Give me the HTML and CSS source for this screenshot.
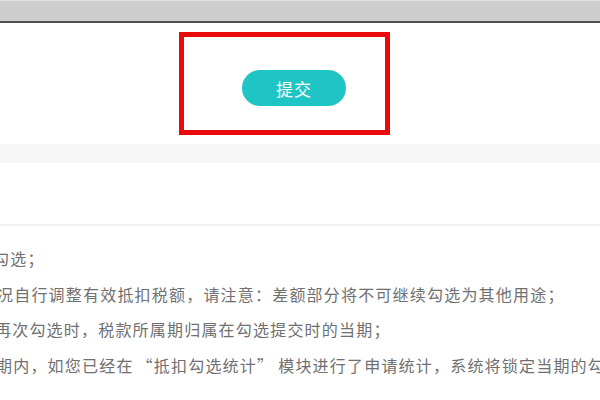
FILE: index.html
```html
<!DOCTYPE html>
<html lang="zh-CN">
<head>
<meta charset="utf-8">
<title>提交</title>
<link rel="stylesheet" href="styles.css">
</head>
<body>
<div class="topbar"></div>
<section class="submit-area">
  <div class="highlight">
    <button class="submit-btn" type="button">提交</button>
  </div>
</section>
<div class="band"></div>
<div class="spacer"></div>
<section class="notes">
  <p class="line l1">勾选；</p>
  <p class="line l2">况自行调整有效抵扣税额，请注意：差额部分将不可继续勾选为其他用途；</p>
  <p class="line l3">再次勾选时，税款所属期归属在勾选提交时的当期；</p>
  <p class="line l4">期内，如您已经在<span class="qo">“</span>抵扣勾选统计<span class="qc">”</span>模块进行了申请统计，系统将锁定当期的勾选</p>
</section>
</body>
</html>
```

FILE: styles.css
```css
html, body {
  margin: 0;
  padding: 0;
  width: 600px;
  height: 400px;
  overflow: hidden;
  background: #ffffff;
  font-family: "Noto Sans CJK SC", "Noto Sans", sans-serif;
}

.topbar {
  height: 20px;
  background: #cdcdcd;
  border-top: 1px solid #e2e2e2;
  border-bottom: 2px solid #505050;
}

.submit-area {
  height: 121px;
  padding-top: 9px;
  box-sizing: border-box;
}

.highlight {
  margin-left: 179px;
  width: 211px;
  height: 103px;
  box-sizing: border-box;
  border: 5px solid #ea0a0a;
  padding-top: 33px;
  padding-left: 58px;
}

.submit-btn {
  display: flex;
  align-items: center;
  justify-content: center;
  width: 104px;
  height: 36px;
  border: none;
  border-radius: 18px;
  background: #1fc5c4;
  color: #ffffff;
  font-family: "Noto Sans CJK SC", "Noto Sans", sans-serif;
  font-size: 17px;
  letter-spacing: 1px;
  padding: 0;
}

.band {
  height: 19px;
  background: #f6f6f6;
}

.spacer {
  height: 61px;
  border-bottom: 2px solid #f0f0f0;
}

.notes {
  padding-top: 15px;
  color: #707070;
  font-size: 16px;
  letter-spacing: 1.2px;
  white-space: nowrap;
}

.line {
  margin: 0;
  line-height: 35.5px;
  height: 35.5px;
}

.qo { padding-left: 3px; }
.qc { padding-right: 4px; }

.l1 { margin-left: -7px; }
.l2 { margin-left: -3px; }
.l3 { margin-left: -5px; }
.l4 { margin-left: -4px; }
```
